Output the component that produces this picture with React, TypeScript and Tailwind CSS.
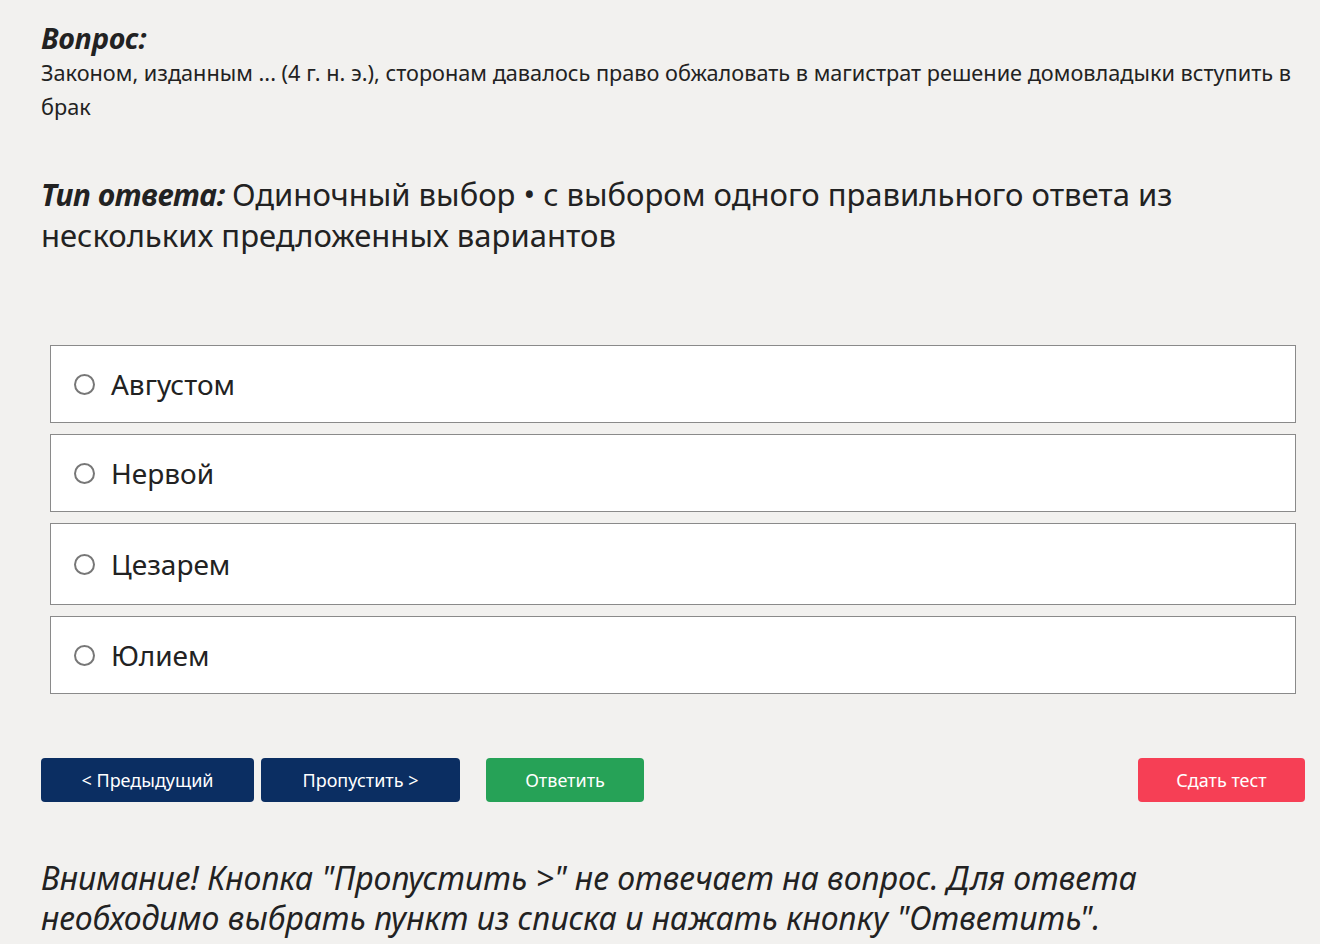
import { useState } from "react";

const options = [
  { label: "Августом", h: "h-[78px]" },
  { label: "Нервой", h: "h-[78px]" },
  { label: "Цезарем", h: "h-[82px]" },
  { label: "Юлием", h: "h-[78px]" },
];

export default function App() {
  const [selected, setSelected] = useState<number | null>(null);

  return (
    <div
      className="min-h-screen bg-[#f2f1ef] text-[#222] pl-[41px] pr-[15px] pt-[20px]"
      style={{ fontFamily: '"Noto Sans", "Open Sans", sans-serif' }}
    >
      {/* ---------- Question ---------- */}
      <h2 className="text-[28.5px] font-bold italic leading-[36px]">Вопрос:</h2>
      <p className="text-[21.7px] leading-[34px]">
        Законом, изданным ... (4 г. н. э.), сторонам давалось право обжаловать в магистрат решение домовладыки вступить в брак
      </p>

      {/* ---------- Answer type ---------- */}
      <p className="mt-[50px] text-[31px] leading-[40px]">
        <span className="inline-block mr-[7px] font-bold italic text-[30px] tracking-[-0.3px]">Тип ответа:</span>
        Одиночный выбор • с выбором одного правильного ответа из нескольких предложенных вариантов
      </p>

      {/* ---------- Options ---------- */}
      <div className="mt-[90px] px-[9px] flex flex-col gap-[11px]">
        {options.map((opt, i) => (
          <label
            key={opt.label}
            onClick={() => setSelected(i)}
            className={`${opt.h} bg-white border-[1.5px] border-[#8a8a8a] flex items-center pl-[23px] cursor-pointer`}
          >
            <span className="w-[21px] h-[21px] rounded-full border-[2px] border-[#777] mr-[16px] flex items-center justify-center">
              {selected === i && <span className="w-[11px] h-[11px] rounded-full bg-[#333]" />}
            </span>
            <span className="text-[28px] leading-none">{opt.label}</span>
          </label>
        ))}
      </div>

      {/* ---------- Buttons ---------- */}
      <div className="mt-[64px] flex items-center">
        <button className="w-[213px] h-[44px] rounded-[4px] bg-[#0b2e62] text-white text-[18px]">
          &lt; Предыдущий
        </button>
        <button className="ml-[7px] w-[199px] h-[44px] rounded-[4px] bg-[#0b2e62] text-white text-[18px]">
          Пропустить &gt;
        </button>
        <button className="ml-[26px] w-[158px] h-[44px] rounded-[4px] bg-[#26a257] text-white text-[18px]">
          Ответить
        </button>
        <button className="ml-auto w-[167px] h-[44px] rounded-[4px] bg-[#f63f55] text-white text-[18px]">
          Сдать тест
        </button>
      </div>

      {/* ---------- Notice ---------- */}
      <p className="mt-[56px] text-[32px] italic leading-[40px]">
        Внимание! Кнопка "Пропустить &gt;" не отвечает на вопрос. Для ответа необходимо выбрать пункт из списка и нажать кнопку "Ответить".
      </p>
    </div>
  );
}
